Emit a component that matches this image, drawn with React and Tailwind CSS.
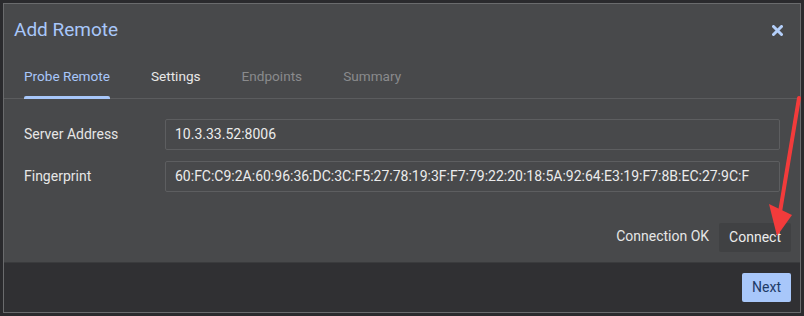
import React from 'react';

const tabs = [
  { label: 'Probe Remote', cls: 'text-[#a8c7fa]', active: true },
  { label: 'Settings', cls: 'text-[#e8e8e8]' },
  { label: 'Endpoints', cls: 'text-[#8a8b8d]' },
  { label: 'Summary', cls: 'text-[#8a8b8d]' },
];

function Field({ label, value }) {
  return (
    <div className="flex items-center h-[31px]">
      <div className="w-[141px] text-[14px] text-[#e6e6e6]">{label}</div>
      <div className="flex-1 h-full border border-[#5d5e60] rounded-[2px] px-[9px] flex items-center text-[14px] text-[#ececec] overflow-hidden whitespace-nowrap">
        {value}
      </div>
    </div>
  );
}

export default function App() {
  return (
    <div className="w-[804px] h-[316px] bg-[#2a2a2d] p-[3px] font-['Roboto',sans-serif]">
      <div className="relative w-full h-full border border-[#6a6b6d] flex flex-col bg-[#48494b]">
        {/* header */}
        <div className="flex items-center justify-between pl-[10px] pr-[17px] h-[52px]">
          <span className="text-[19px] text-[#a8c7fa]">Add Remote</span>
          <svg width="11" height="11" viewBox="0 0 11 11">
            <path d="M1.5 1.5 L9.5 9.5 M9.5 1.5 L1.5 9.5" stroke="#b4cffa" strokeWidth="3" strokeLinecap="round" />
          </svg>
        </div>

        {/* tabs */}
        <div className="flex gap-[41px] px-[20px] border-b border-[#5b5c5e] h-[43px]">
          {tabs.map(t => (
            <div key={t.label} className={`relative flex items-center text-[13.6px] pb-[2px] ${t.cls}`}>
              {t.label}
              {t.active && (
                <div className="absolute left-0 right-0 bottom-[-1px] h-[3px] rounded-t-[2px] bg-[#a8c7fa]" />
              )}
            </div>
          ))}
        </div>

        {/* form */}
        <div className="flex flex-col gap-[11px] pl-[20px] pr-[20px] pt-[20px]">
          <Field label="Server Address" value="10.3.33.52:8006" />
          <Field label="Fingerprint" value="60:FC:C9:2A:60:96:36:DC:3C:F5:27:78:19:3F:F7:79:22:20:18:5A:92:64:E3:19:F7:8B:EC:27:9C:F" />
        </div>

        <div className="flex-1 flex items-end justify-end gap-[10px] pr-[9px] pb-[10px]">
          <span className="text-[14px] text-[#e6e6e6] mb-[5px]">Connection OK</span>
          <button className="h-[29px] px-[10px] bg-[#404143] text-[14px] text-[#ececec] rounded-[2px]">Connect</button>
        </div>

        {/* footer */}
        <div className="h-[50px] bg-[#303033] border-t border-[#3a3b3d] flex items-center justify-end pr-[9px]">
          <button className="h-[29px] px-[10px] bg-[#a8c7fa] text-[14px] text-[#1d3a66] rounded-[2px]">Next</button>
        </div>

        {/* annotation arrow */}
        <svg className="absolute left-[760px] top-[90px]" width="40" height="150" viewBox="0 0 40 150">
          <path d="M35 4 L16 118" stroke="#f23b3b" strokeWidth="4" strokeLinecap="round" />
          <path d="M5 110 L28 121 L13 142 Z" fill="#f23b3b" />
        </svg>
      </div>
    </div>
  );
}
